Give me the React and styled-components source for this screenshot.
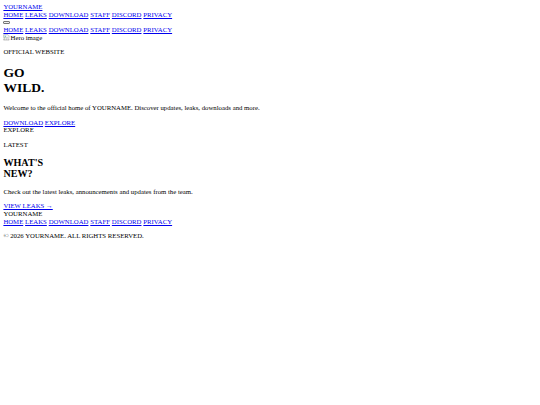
import React from 'react'
import styled, { createGlobalStyle } from 'styled-components'

// the reference is a plain unstyled page shot at 1280px and shrunk to 540px
const S = 540 / 1280

const GlobalStyle = createGlobalStyle`
html, body {
  background:#fff;
}
body {
  margin:${8 * S}px;
  font-family:"Liberation Serif", "Times New Roman", serif;
  font-size:${16 * S}px;
  line-height:1.13;
  color:#000;
}
`

const Header = styled.header`
display:block;
`
const Link = styled.a`
color:#0000EE;
text-decoration:underline;
cursor:pointer;
`
const NavBar = styled.nav`
display:block;
`
const NavRow = styled.ul`
list-style:none;
margin:0;
padding:0;
display:flex;
gap:${4.4 * S}px;
`
const MenuLine = styled.div`
display:flex;
align-items:center;
height:${18 * S}px;
`
const MenuButton = styled.button`
all:unset;
display:block;
width:${16 * S}px;
height:${7 * S}px;
box-sizing:border-box;
background:#efefef;
border:1px solid #767676;
border-radius:1px;
`
const HeroPic = styled.div`
display:flex;
align-items:center;
gap:${1 * S}px;
height:${18 * S}px;
`
const Section = styled.section`
display:block;
`
const Para = styled.p`
margin:1em 0;
`
const Title = styled.h1`
font-size:2em;
font-weight:bold;
margin:0.67em 0;
`
const SubTitle = styled.h2`
font-size:1.5em;
font-weight:bold;
margin:0.83em 0;
`
const Actions = styled.div`
display:block;
`
const Footer = styled.footer`
display:block;
`

const links = ['HOME', 'LEAKS', 'DOWNLOAD', 'STAFF', 'DISCORD', 'PRIVACY']

const Nav = () => (
  <NavBar>
    <NavRow>
      {links.map(l => (
        <li key={l}><Link>{l}</Link></li>
      ))}
    </NavRow>
  </NavBar>
)

const BrokenIcon = () => (
  <svg width={16 * S} height={16 * S} viewBox="0 0 16 16">
    <path d="M1.5 1.5h10l3 3v4l-2 1.5-2-1.5-2 2-2-2-2 2-3-2z" fill="#f4f4f4" stroke="#8a8a8a" />
    <path d="M1.5 11.5l3 2 2-2 2 2 2-2 2 1.5 2-1.5v3h-13z" fill="#f4f4f4" stroke="#8a8a8a" />
    <circle cx="5" cy="5" r="1.3" fill="#5aa0e0" />
    <path d="M3 9l3-2.5 2 1.5" fill="none" stroke="#3fa35a" strokeWidth="1.2" />
  </svg>
)

export default function App() {
  return (
    <>
      <GlobalStyle />
      <Header>
        <Link>YOURNAME</Link>
        <Nav />
        <MenuLine>
          <MenuButton aria-label="menu" />
        </MenuLine>
        <Nav />
      </Header>

      <HeroPic>
        <BrokenIcon />
        <span>Hero image</span>
      </HeroPic>

      <Section>
        <Para>OFFICIAL WEBSITE</Para>
        <Title>GO<br />WILD.</Title>
        <Para>Welcome to the official home of YOURNAME. Discover updates, leaks, downloads and more.</Para>
        <Actions>
          <Link>DOWNLOAD</Link> <Link>EXPLORE</Link>
        </Actions>
        <div>EXPLORE</div>
      </Section>

      <Section>
        <Para>LATEST</Para>
        <SubTitle>WHAT'S<br />NEW?</SubTitle>
        <Para>Check out the latest leaks, announcements and updates from the team.</Para>
        <Link>VIEW LEAKS →</Link>
      </Section>

      <Footer>
        <div>YOURNAME</div>
        <Nav />
        <Para>© 2026 YOURNAME. ALL RIGHTS RESERVED.</Para>
      </Footer>
    </>
  )
}
